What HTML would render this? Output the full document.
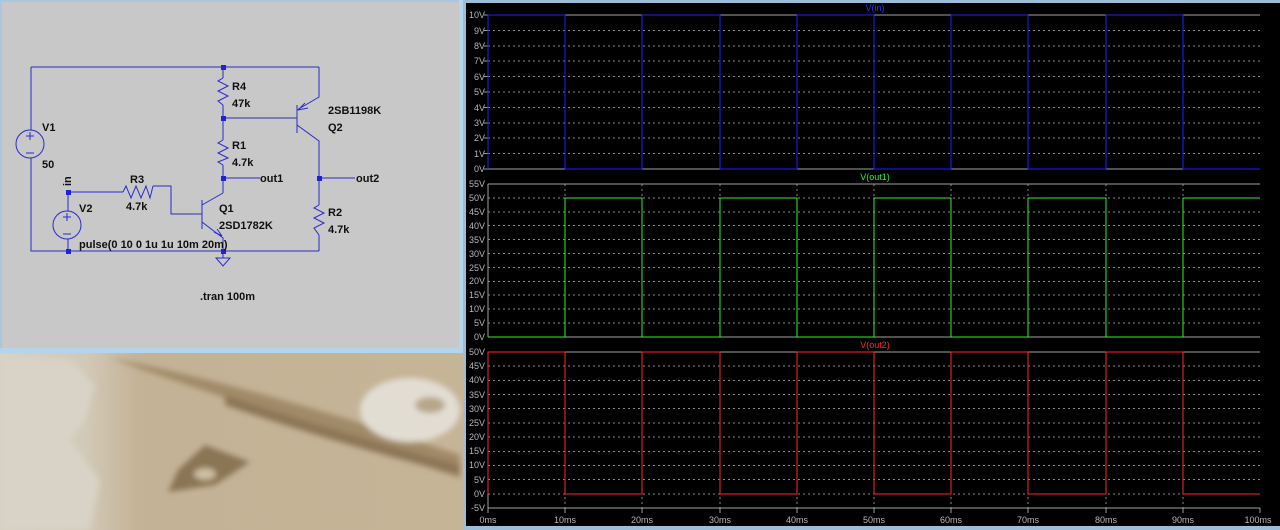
<!DOCTYPE html>
<html><head><meta charset="utf-8"><style>
html,body{margin:0;padding:0;width:1280px;height:530px;overflow:hidden;background:#000}
svg{display:block}
text{font-family:"Liberation Sans",sans-serif}
</style></head><body>
<svg width="1280" height="530" xmlns="http://www.w3.org/2000/svg">
<defs>
<filter id="bl"><feGaussianBlur stdDeviation="3"/></filter>
<linearGradient id="sep" x1="0" y1="0" x2="1" y2="0">
<stop offset="0" stop-color="#d6d0c2"/><stop offset="0.18" stop-color="#d2cab8"/><stop offset="0.3" stop-color="#c4b296"/><stop offset="1" stop-color="#c6b497"/></linearGradient>
</defs>
<rect x="0" y="352" width="464" height="178" fill="url(#sep)"/>
<g filter="url(#bl)">
<path d="M70,360 L95,385 L85,420 L70,440 L100,480 L90,530 L0,530 L0,355Z" fill="#d8d3c6"/>
<path d="M110,358 Q250,385 460,455 L460,478 Q260,410 150,372Z" fill="#a08a68"/>
<path d="M225,395 Q330,430 460,465 L460,475 Q330,442 225,405Z" fill="#8c7656"/>
<path d="M205,445 L250,462 L215,485 L168,492 L178,470Z" fill="#8a7454"/>
<ellipse cx="205" cy="474" rx="11" ry="6" fill="#cdbda1"/>
<ellipse cx="410" cy="410" rx="50" ry="32" fill="#e2ddd3"/>
<ellipse cx="430" cy="405" rx="15" ry="8" fill="#b8a689"/>
</g>
<rect x="0" y="0" width="463" height="353" fill="#a8c8e0"/>
<rect x="2" y="2" width="457" height="346" fill="#c8c8c8"/>
<rect x="0" y="348" width="463" height="5" fill="#b4d4ec"/>
<rect x="459" y="0" width="4" height="353" fill="#b4d4ec"/>
<g stroke="#2a2ad0" stroke-width="1" fill="none">
<path d="M31,67 H319 M31,67 V130 M31,158 V251 H319 M223,67 V78 M223,105 V140 M223,165 V193 M223,118 H297 M297,105 V133 M297,110 L319,97 V67 M297,125 L319,141 V205 M319,235 V251 M319,178 H355 M223,178 H260 M68,192 V211 M68,239 V251 M68,192 H123 M153,186 H171 V214 H202 M202,200 V229 M202,205 L223,193 M202,222 L223,238 V251 M223,251 V258"/>
<path d="M223,78 L218,81 L228,86 L218,91 L228,96 L218,101 L223,105"/>
<path d="M223,140 L218,143 L228,148 L218,153 L228,158 L218,162 L223,165"/>
<path d="M319,205 L314,208 L324,213 L314,218 L324,223 L314,228 L319,235"/>
<path d="M123,192 L126,186 L131,198 L136,186 L141,198 L146,186 L150,198 L153,186"/>
<path d="M216,258 H230 L223,266 Z"/>
<circle cx="30" cy="144" r="14"/><circle cx="67" cy="225" r="14"/>
<path d="M26,136 H34 M30,132 V140 M26,153 H34 M63,217 H71 M67,213 V221 M63,234 H71"/>
<path d="M298,110 L305,103 M298,110 L308,108" />
<path d="M214,232 L222,236 L217,229"/>
</g>
<g fill="#2020e0">
<rect x="221" y="65" width="5" height="5"/><rect x="221" y="116" width="5" height="5"/><rect x="221" y="176" width="5" height="5"/><rect x="317" y="176" width="5" height="5"/><rect x="66" y="190" width="5" height="5"/><rect x="66" y="249" width="5" height="5"/><rect x="221" y="249" width="5" height="5"/>
</g>
<g font-size="11" font-weight="bold" fill="#101010">
<text x="42" y="131">V1</text><text x="42" y="168">50</text>
<text x="232" y="90">R4</text><text x="232" y="107">47k</text>
<text x="328" y="114">2SB1198K</text><text x="328" y="131">Q2</text>
<text x="232" y="149">R1</text><text x="232" y="166">4.7k</text>
<text x="260" y="182">out1</text><text x="356" y="182">out2</text>
<text x="130" y="183">R3</text><text x="126" y="210">4.7k</text>
<text x="79" y="212">V2</text><text x="219" y="212">Q1</text><text x="219" y="229">2SD1782K</text>
<text x="328" y="216">R2</text><text x="328" y="233">4.7k</text>
<text x="79" y="248">pulse(0 10 0 1u 1u 10m 20m)</text>
<text x="200" y="300">.tran 100m</text>
<text transform="translate(71,186) rotate(-90)">in</text>
</g>
<rect x="463" y="0" width="817" height="530" fill="#000"/>
<rect x="463" y="0" width="3" height="530" fill="#9cbcd8"/>
<rect x="463" y="0" width="817" height="3" fill="#9cbcd8"/>
<rect x="463" y="526" width="817" height="4" fill="#9cbcd8"/>
<g shape-rendering="crispEdges">
<g stroke="#8a8a8a" stroke-width="1" stroke-dasharray="2,3">
<path d="M565,15V169M642,15V169M720,15V169M797,15V169M874,15V169M951,15V169M1028,15V169M1106,15V169M1183,15V169"/>
<path d="M565,184V337M642,184V337M720,184V337M797,184V337M874,184V337M951,184V337M1028,184V337M1106,184V337M1183,184V337"/>
<path d="M565,352V508M642,352V508M720,352V508M797,352V508M874,352V508M951,352V508M1028,352V508M1106,352V508M1183,352V508"/>
<path d="M488,30.4H1260M488,45.8H1260M488,61.2H1260M488,76.6H1260M488,92H1260M488,107.4H1260M488,122.8H1260M488,138.2H1260M488,153.6H1260"/>
<path d="M488,197.9H1260M488,211.8H1260M488,225.7H1260M488,239.6H1260M488,253.5H1260M488,267.4H1260M488,281.3H1260M488,295.2H1260M488,309.1H1260M488,323H1260"/>
<path d="M488,366.2H1260M488,380.4H1260M488,394.5H1260M488,408.7H1260M488,422.9H1260M488,437.1H1260M488,451.3H1260M488,465.4H1260M488,479.6H1260M488,493.8H1260"/>
</g>
<g stroke="#a0a0a0" stroke-width="1" fill="none">
<path d="M488,15H1260M488,169H1260M488,184H1260M488,337H1260M488,352H1260M488,508H1260M488,15V169M488,184V337M488,352V508"/>
<path d="M484,15H488M484,30.4H488M484,45.8H488M484,61.2H488M484,76.6H488M484,92H488M484,107.4H488M484,122.8H488M484,138.2H488M484,153.6H488M484,169H488"/>
<path d="M488,508V513M565,508V513M642,508V513M720,508V513M797,508V513M874,508V513M951,508V513M1028,508V513M1106,508V513M1183,508V513M1260,508V513"/>
</g>
<polyline fill="none" stroke="#2020ff" stroke-width="1" points="488,169 488,15 565,15 565,169 642,169 642,15 720,15 720,169 797,169 797,15 874,15 874,169 951,169 951,15 1028,15 1028,169 1106,169 1106,15 1183,15 1183,169 1260,169"/>
<polyline fill="none" stroke="#30f030" stroke-width="1" points="488,337 565,337 565,198 642,198 642,337 720,337 720,198 797,198 797,337 874,337 874,198 951,198 951,337 1028,337 1028,198 1106,198 1106,337 1183,337 1183,198 1260,198"/>
<polyline fill="none" stroke="#ff2828" stroke-width="1" points="488,494 488,352 565,352 565,494 642,494 642,352 720,352 720,494 797,494 797,352 874,352 874,494 951,494 951,352 1028,352 1028,494 1106,494 1106,352 1183,352 1183,494 1260,494"/>
</g>
<g font-size="9" fill="#b8b8b8" text-anchor="end">
<text x="485" y="18">10V</text><text x="485" y="34">9V</text><text x="485" y="49">8V</text><text x="485" y="64">7V</text><text x="485" y="80">6V</text><text x="485" y="95">5V</text><text x="485" y="111">4V</text><text x="485" y="126">3V</text><text x="485" y="141">2V</text><text x="485" y="157">1V</text><text x="485" y="172">0V</text>
<text x="485" y="187">55V</text><text x="485" y="201">50V</text><text x="485" y="215">45V</text><text x="485" y="229">40V</text><text x="485" y="243">35V</text><text x="485" y="257">30V</text><text x="485" y="271">25V</text><text x="485" y="284">20V</text><text x="485" y="298">15V</text><text x="485" y="312">10V</text><text x="485" y="326">5V</text><text x="485" y="340">0V</text>
<text x="485" y="355">50V</text><text x="485" y="369">45V</text><text x="485" y="383">40V</text><text x="485" y="398">35V</text><text x="485" y="412">30V</text><text x="485" y="426">25V</text><text x="485" y="440">20V</text><text x="485" y="454">15V</text><text x="485" y="468">10V</text><text x="485" y="483">5V</text><text x="485" y="497">0V</text><text x="485" y="511">-5V</text>
</g>
<g font-size="9" fill="#b8b8b8" text-anchor="middle">
<text x="488" y="523">0ms</text><text x="565" y="523">10ms</text><text x="642" y="523">20ms</text><text x="720" y="523">30ms</text><text x="797" y="523">40ms</text><text x="874" y="523">50ms</text><text x="951" y="523">60ms</text><text x="1028" y="523">70ms</text><text x="1106" y="523">80ms</text><text x="1183" y="523">90ms</text><text x="1258" y="523">100ms</text>
</g>
<g font-size="9" text-anchor="middle">
<text x="875" y="11" fill="#3030ff">V(in)</text>
<text x="875" y="180" fill="#30f030">V(out1)</text>
<text x="875" y="348" fill="#ff2828">V(out2)</text>
</g>
</svg>
</body></html>
